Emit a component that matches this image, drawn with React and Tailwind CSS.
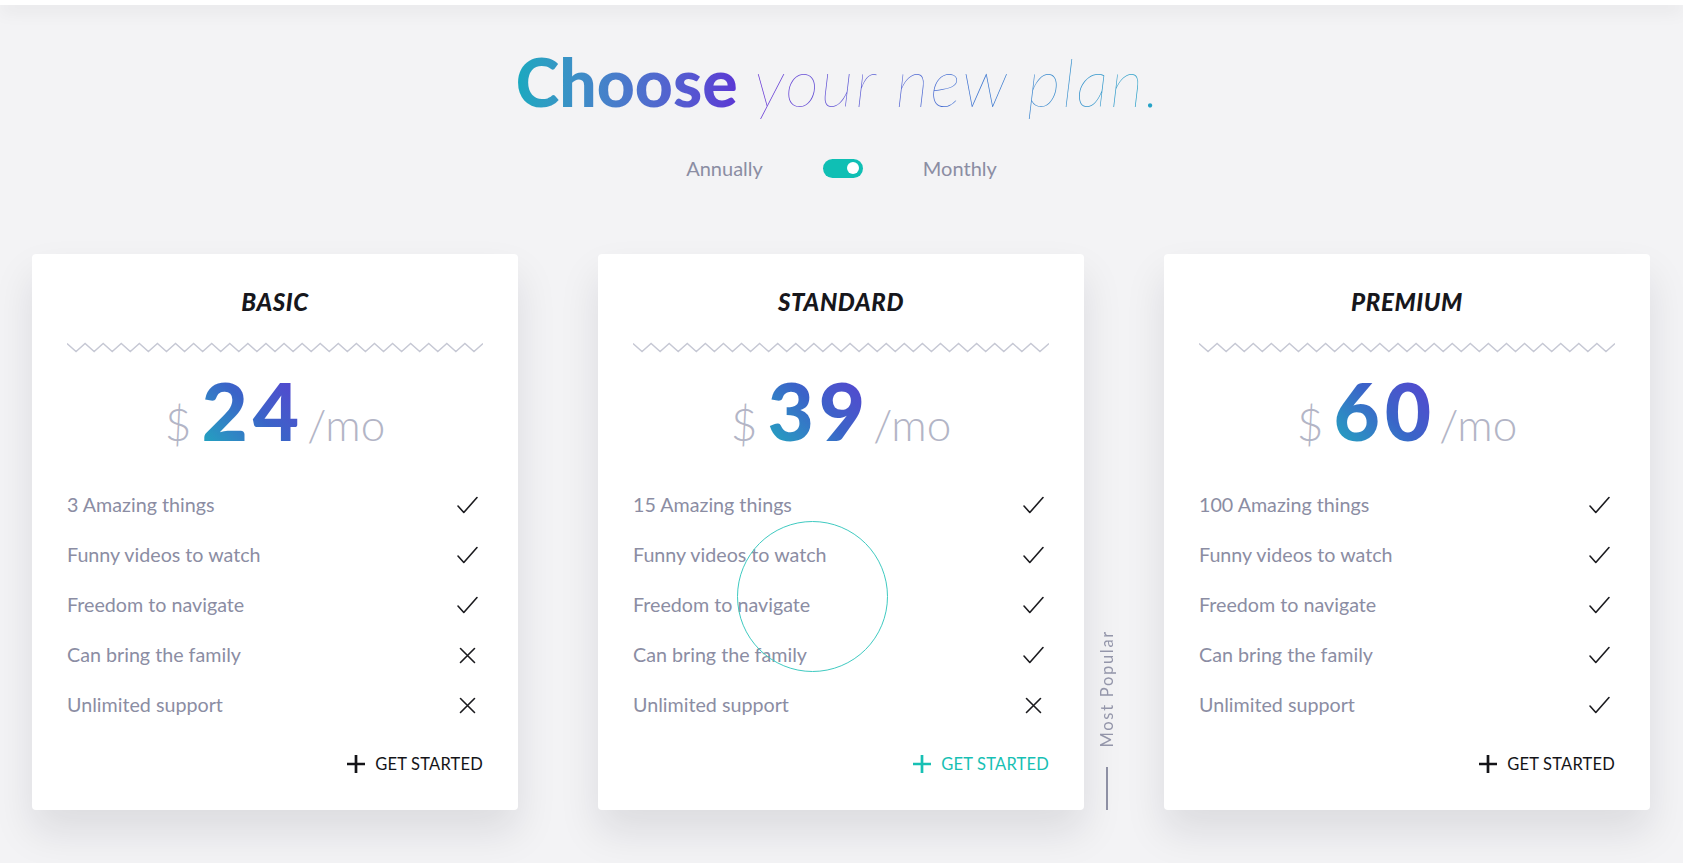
import React from "react";

const plans = [
  {
    name: "BASIC",
    price: "24",
    features: [
      ["3 Amazing things", true],
      ["Funny videos to watch", true],
      ["Freedom to navigate", true],
      ["Can bring the family", false],
      ["Unlimited support", false],
    ],
  },
  {
    name: "STANDARD",
    price: "39",
    popular: true,
    features: [
      ["15 Amazing things", true],
      ["Funny videos to watch", true],
      ["Freedom to navigate", true],
      ["Can bring the family", true],
      ["Unlimited support", false],
    ],
  },
  {
    name: "PREMIUM",
    price: "60",
    features: [
      ["100 Amazing things", true],
      ["Funny videos to watch", true],
      ["Freedom to navigate", true],
      ["Can bring the family", true],
      ["Unlimited support", true],
    ],
  },
];

function Zigzag() {
  const n = 46;
  const w = 416;
  const step = w / n;
  const pts = [];
  for (let i = 0; i <= n; i++) {
    pts.push(`${(i * step).toFixed(2)},${i % 2 === 0 ? 1.5 : 9.5}`);
  }
  return (
    <svg width="100%" height="11" viewBox={`0 0 ${w} 11`} preserveAspectRatio="none" className="block">
      <polyline points={pts.join(" ")} fill="none" stroke="#c6c8d4" strokeWidth="1.4" />
    </svg>
  );
}

function Check() {
  return (
    <svg width="23" height="19" viewBox="0 0 23 19" fill="none">
      <path d="M2 10 L7.8 16.5 L21 1.5" stroke="#1b1b1f" strokeWidth="1.6" strokeLinecap="round" strokeLinejoin="round" />
    </svg>
  );
}

function Cross() {
  return (
    <svg width="17" height="17" viewBox="0 0 17 17" fill="none">
      <path d="M1.5 1.5 L15.5 15.5 M15.5 1.5 L1.5 15.5" stroke="#1b1b1f" strokeWidth="1.6" strokeLinecap="round" />
    </svg>
  );
}

function Plus({ color }) {
  return (
    <svg width="18" height="18" viewBox="0 0 18 18" fill="none">
      <path d="M9 0 V18 M0 9 H18" stroke={color} strokeWidth="2.7" />
    </svg>
  );
}

function Card({ plan }) {
  const accent = plan.popular;
  return (
    <div className="relative w-[486px] h-[556px] bg-white rounded-[4px] shadow-[0_22px_40px_rgba(20,20,40,0.10)] px-[35px] flex flex-col">
      <div className="mt-[34px] h-[28px] leading-[28px] text-center text-[24px] font-black italic text-[#17171c] tracking-[0.6px]">
        {plan.name}
      </div>
      <div className="mt-[26px]">
        <Zigzag />
      </div>
      <div className="mt-[7px] h-[100px] flex items-baseline justify-center">
        <span className="text-[46px] font-light text-[#b3b5c6] leading-[100px] mr-[10px]">$</span>
        <span className="text-[80px] font-black leading-[100px] tracking-[5px] bg-gradient-to-tr from-[#14b0bc] via-[#3a64c8] to-[#5a36d2] bg-clip-text text-transparent">
          {plan.price}
        </span>
        <span className="text-[44px] font-light text-[#b3b5c6] leading-[100px] ml-[3px]">/mo</span>
      </div>
      <div className="mt-[20px] flex flex-col">
        {plan.features.map(([t, ok]) => (
          <div key={t} className="h-[50px] flex items-center justify-between">
            <span className="text-[19.7px] text-[#8b8da3]">{t}</span>
            <span className="w-[23px] mr-[4px] flex justify-center">{ok ? <Check /> : <Cross />}</span>
          </div>
        ))}
      </div>
      <div className="mt-[22px] flex justify-end items-center gap-[10px]">
        <Plus color={accent ? "#17c0b4" : "#141418"} />
        <span className={`text-[16.5px] tracking-[0.2px] ${accent ? "text-[#17c0b4]" : "text-[#141418]"}`}>GET STARTED</span>
      </div>
      {accent && (
        <>
          <div className="absolute left-[139px] top-[267px] w-[151px] h-[151px] rounded-full border-[1.5px] border-[#3fcac1] pointer-events-none" />
          <div className="absolute left-[497px] bottom-0 flex flex-col items-center">
            <span className="[writing-mode:vertical-rl] rotate-180 text-[16.5px] tracking-[1.7px] text-[#9496aa]">Most Popular</span>
            <span className="mt-[20px] w-[2px] h-[43px] bg-[#8e90a4]" />
          </div>
        </>
      )}
    </div>
  );
}

export default function App() {
  return (
    <div className="min-h-[863px] w-full bg-[#f3f3f5] flex flex-col items-center" style={{ fontFamily: "Lato, 'Noto Sans', sans-serif" }}>
      <div className="w-full h-[5px] bg-white shadow-[0_4px_18px_rgba(0,0,0,0.13)]" />
      <h1 className="mt-[39px] h-[76px] leading-[76px] whitespace-nowrap">
        <span className="text-[66px] font-black bg-gradient-to-r from-[#17a9bf] to-[#5b36d4] bg-clip-text text-transparent">Choose</span>
        <span className="text-[66px] font-extralight italic tracking-[1.5px] bg-gradient-to-r from-[#6a2ed6] via-[#3d6bd0] to-[#22a7c6] bg-clip-text text-transparent pl-[17px] pr-[6px]">your new plan.</span>
      </h1>
      <div className="mt-[33px] flex items-center">
        <span className="text-[20px] text-[#8b8da3]">Annually</span>
        <div className="ml-[60px] mr-[60px] w-[40px] h-[19px] rounded-full bg-[#0fbfb4] flex items-center justify-end pr-[4px]">
          <span className="w-[12px] h-[12px] rounded-full bg-white" />
        </div>
        <span className="text-[20px] text-[#8b8da3]">Monthly</span>
      </div>
      <div className="mt-[71px] w-full pl-[32px] flex gap-[80px]">
        {plans.map((p) => (
          <Card key={p.name} plan={p} />
        ))}
      </div>
    </div>
  );
}
